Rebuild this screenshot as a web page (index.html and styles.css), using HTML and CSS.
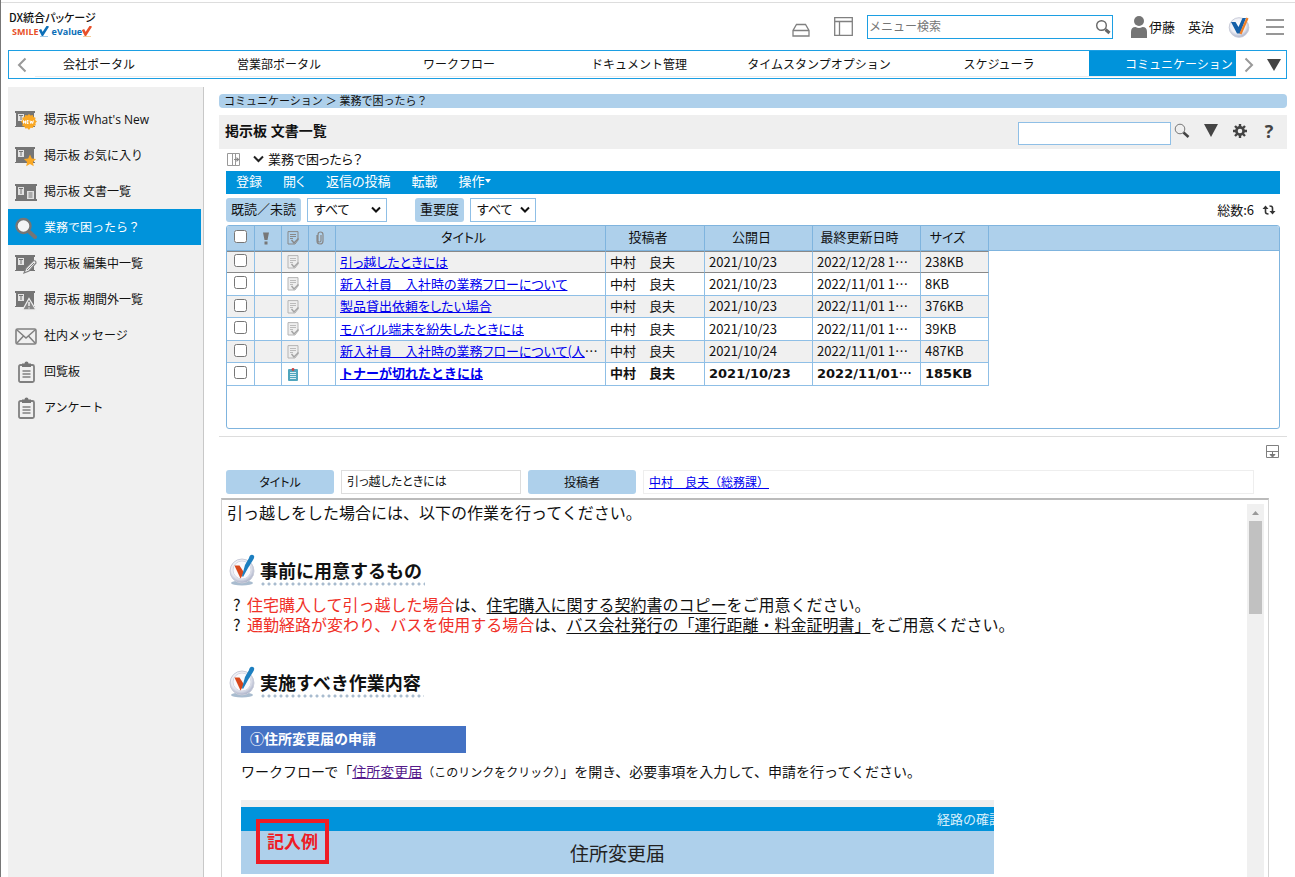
FILE: index.html
```html
<!DOCTYPE html>
<html lang="ja">
<head>
<meta charset="utf-8">
<title>掲示板 文書一覧</title>
<link rel="stylesheet" href="styles.css">
</head>
<body>
<svg class="defs" aria-hidden="true">
  <defs>
    <radialGradient id="disc" cx="45%" cy="40%" r="60%">
      <stop offset="0" stop-color="#ffffff"/><stop offset="0.65" stop-color="#eeeff5"/><stop offset="1" stop-color="#a9b0c8"/>
    </radialGradient>
  </defs>
  <symbol id="i-search" viewBox="0 0 16 16"><circle cx="6.5" cy="6.5" r="4.8" fill="none" stroke="currentColor" stroke-width="1.4"/><path d="M10.5 10.5 14.5 14" stroke="currentColor" stroke-width="3" fill="none"/></symbol>
  <symbol id="i-board" viewBox="0 0 22 22"><path d="M0 2h20v2h-1v13h1v1H0v-1h1V4H0z" fill="#757575"/><path d="M3 5h6v7H3z" fill="#e4e4e4"/><path d="M4 6.500h4M6 7v4" stroke="#757575" fill="none"/></symbol>
  <symbol id="i-clip" viewBox="0 0 22 22"><rect x="4" y="4" width="15" height="17" rx="1.500" fill="none" stroke="#808080" stroke-width="1.800"/><path d="M7 2.500h2.500a2 2 0 0 1 4 0H16V6H7z" fill="#757575"/><path d="M7.500 10h8M7.500 13h8M7.500 16h8" stroke="#808080" stroke-width="1.600"/></symbol>
  <symbol id="i-read" viewBox="0 0 12 14"><path d="M1 .6h10v8.500L8 13H1z" fill="#eee" stroke="#b4b4b4"/><path d="M3 3.500h6M3 5.500h6M3 7.500h3" stroke="#bbb"/><path d="m4.500 9 2.500 3 4.500-4.500" fill="none" stroke="#a4a4a4" stroke-width="1.500"/></symbol>
  <symbol id="i-mark" viewBox="0 0 27 32">
    <ellipse cx="13" cy="29" rx="11" ry="2.500" fill="#a9bccf"/>
    <circle cx="13" cy="17" r="12" fill="url(#disc)" stroke="#c9ccd9"/>
    <circle cx="13" cy="16" r="9" fill="#fafafd" stroke="#d5d8e4"/>
    <path d="M5.500 11.500h5l4.500 7-3.500 6z" fill="#d8481c"/>
    <path d="m13 22 3-11 4-7q1-4 4-3 2.500 1 0 5l-5 8-5 9z" fill="#1d7fc0"/>
  </symbol>
</svg>

<div class="app">
  <header class="top">
    <div class="logo">
      <div class="logo-title">DX統合パッケージ</div>
      <div class="logo-sub">
        <span class="smile">SMILE</span><svg width="10" height="11" viewBox="0 0 10 11"><path d="m1 3.500 2.500 5L9 0" fill="none" stroke="#0b6fb8" stroke-width="2.600"/><path d="M1 10.500h8" stroke="#9ec9e8"/></svg>
        <span class="evalue">eValue</span><svg width="10" height="11" viewBox="0 0 10 11"><path d="m1 3.500 2.500 5L9 0" fill="none" stroke="#e8502a" stroke-width="2.600"/><path d="M1 10.500h8" stroke="#f5cd9c"/></svg>
      </div>
    </div>
    <div class="top-tools">
      <button class="icon-btn tray" aria-label="トレイ"><svg width="18" height="20" viewBox="0 0 18 20"><path d="M4.500 5.500h9l3.500 6v5.500H1v-5.500zM1 11.500h16" fill="none" stroke="#808080" stroke-width="1.300"/></svg></button>
      <button class="icon-btn panes" aria-label="レイアウト"><svg width="19" height="19" viewBox="0 0 19 19"><path d="M.7.7h17.600v17.600H.7zM.7 4.500h17.600M5.500 4.500v14" fill="none" stroke="#808080" stroke-width="1.300"/></svg></button>
      <label class="menu-search">
        <input type="text" placeholder="メニュー検索" aria-label="メニュー検索">
        <svg width="16" height="16"><use href="#i-search"/></svg>
      </label>
      <div class="user">
        <svg width="16" height="22" viewBox="0 0 16 22"><circle cx="8" cy="5" r="5" fill="#757575"/><path d="M0 22v-6q0-5 4.500-5 3.500 2 7 0 4.500 0 4.500 5v6z" fill="#757575"/></svg>
        <span>伊藤　英治</span>
      </div>
      <svg class="brand" width="22" height="22" viewBox="0 0 22 22"><circle cx="11" cy="11.500" r="9.800" fill="url(#disc)" stroke="#c9ccd9"/><path d="M3 6h4.500l3 5L14.500 2H18L12 17.500H9z" fill="#1560a8"/><path d="M12.500 18 19.500 2" fill="none" stroke="#f07f26" stroke-width="2.200"/></svg>
      <button class="icon-btn" aria-label="メニュー"><svg width="18" height="16" viewBox="0 0 18 16"><path d="M0 1h18M0 8h18M0 15h18" stroke="#757575" stroke-width="1.600"/></svg></button>
    </div>
  </header>

  <nav class="tabs">
    <div class="tab-view">
      <a href="#">会社ポータル</a><a href="#">営業部ポータル</a><a href="#">ワークフロー</a><a href="#">ドキュメント管理</a><a href="#">タイムスタンプオプション</a><a href="#">スケジューラ</a><a href="#" class="on">コミュニケーション</a>
    </div>
    <button class="icon-btn prev" aria-label="前へ"><svg width="10" height="16" viewBox="0 0 10 16"><path d="M8.500 1.500 2 8l6.500 6.500" fill="none" stroke="#999" stroke-width="2"/></svg></button>
    <button class="icon-btn next" aria-label="次へ"><svg width="10" height="16" viewBox="0 0 10 16"><path d="M1.500 1.500 8 8l-6.500 6.500" fill="none" stroke="#999" stroke-width="2"/></svg></button>
    <button class="icon-btn more" aria-label="一覧"><svg width="14" height="12" viewBox="0 0 14 12"><path d="M0 0h14L7 12z" fill="#444"/></svg></button>
  </nav>

  <div class="body">
    <aside class="side">
      <a href="#"><svg width="22" height="22" viewBox="0 0 22 22"><use href="#i-board"/><path d="m14 5 1.500 1.600 2.200-.6.700 2.100 2.200.7-.500 2.200L22 12.500 20.400 14l.4 2.300-2.200.7-.8 2.100-2.200-.4L14 21l-1.600-1.800-2.200.4-.8-2.100-2.200-.7.500-2.200L6 12.500 7.600 11l-.3-2.200 2.200-.7.700-2.100 2.200.6z" fill="#f9a825"/><path d="M8.500 14.500v-3l2 3v-3M13.500 11.500H12v3h1.500M12 13h1.500M15 11.500l.8 3 .9-2.500.9 2.500.8-3" fill="none" stroke="#fff"/></svg>掲示板 What's New</a>
      <a href="#"><svg width="22" height="22" viewBox="0 0 22 22"><use href="#i-board"/><path d="m15 9.500 1.800 4 4.300.5-3.200 2.900.9 4.300-3.800-2.200-3.800 2.200.9-4.300L8.900 14l4.300-.5z" fill="#f9a825"/></svg>掲示板 お気に入り</a>
      <a href="#"><svg width="22" height="22" viewBox="0 0 22 22"><path d="M0 3h22v2h-1v13h1v2H0v-2h1V5H0z" fill="#757575"/><path d="M3 6h6v8H3zM12 10h7v8h-7z" fill="#e0e0e0"/><path d="M4 7.500h4M6 8v5M13.500 12h4M13.500 14h4M13.500 16h4" stroke="#757575"/></svg>掲示板 文書一覧</a>
      <a href="#" class="on"><svg width="22" height="22" viewBox="0 0 22 22"><circle cx="8.500" cy="9" r="7" fill="#f4f4f4" stroke="#757575" stroke-width="2.400"/><path d="m14.500 15 5.500 5" stroke="#757575" stroke-width="4" stroke-linecap="round"/></svg>業務で困ったら？</a>
      <a href="#"><svg width="22" height="22" viewBox="0 0 22 22"><use href="#i-board"/><path d="m9 20 2-5 7-7q3-1 3 2l-7 8z" fill="#eee" stroke="#808080" stroke-width="1.200"/><path d="m12 17 7-7" stroke="#808080"/></svg>掲示板 編集中一覧</a>
      <a href="#"><svg width="22" height="22" viewBox="0 0 22 22"><use href="#i-board"/><path d="M14 9.500 21 21H7.500z" fill="#888" stroke="#eee" stroke-width="1.300"/><path d="M14 13v4M14 18.500v1" stroke="#eee" stroke-width="1.500"/></svg>掲示板 期間外一覧</a>
      <a href="#"><svg width="22" height="22" viewBox="0 0 22 22"><rect x="1" y="4" width="20" height="15" rx="1.500" fill="none" stroke="#808080" stroke-width="1.600"/><path d="m2 5 9 8 9-8M2 18l6.500-7M20 18l-6.500-7" fill="none" stroke="#808080" stroke-width="1.500"/></svg>社内メッセージ</a>
      <a href="#"><svg width="22" height="22"><use href="#i-clip"/></svg>回覧板</a>
      <a href="#"><svg width="22" height="22"><use href="#i-clip"/></svg>アンケート</a>
    </aside>

    <main class="main">
      <div class="crumbs">コミュニケーション ＞ 業務で困ったら？</div>
      <div class="title-bar">
        <h1>掲示板 文書一覧</h1>
        <input type="text" aria-label="文書検索">
        <button class="icon-btn" aria-label="検索"><svg width="16" height="16" viewBox="0 0 16 16"><circle cx="6" cy="6" r="4.800" fill="none" stroke="#777"/><path d="m9.500 9.500 5 4.500" stroke="#444" stroke-width="2.600"/></svg></button>
        <button class="icon-btn" aria-label="条件"><svg width="14" height="13" viewBox="0 0 14 13"><path d="M0 0h14L7 13z" fill="#444"/></svg></button>
        <button class="icon-btn" aria-label="設定"><svg width="14" height="14" viewBox="0 0 14 14"><circle cx="7" cy="7" r="3.600" fill="none" stroke="#444" stroke-width="2.600"/><path d="M7 0v3M7 11v3M0 7h3M11 7h3M2 2l2 2M10 10l2 2M12 2l-2 2M4 10l-2 2" stroke="#444" stroke-width="2.400"/></svg></button>
        <button class="icon-btn help" aria-label="ヘルプ">?</button>
      </div>

      <section class="list">
        <div class="folder">
          <svg width="14" height="13" viewBox="0 0 14 13"><path d="M.5.5h12v12H.5zM5.500.5v12M8.500.5v12" fill="none" stroke="#999"/><path d="M7 6.500h3" stroke="#888"/><path d="m9.500 4 3 2.500-3 2.500z" fill="#888"/></svg>
          <svg class="chev" width="11" height="8" viewBox="0 0 11 8"><path d="m1 1.500 4.500 4.500L10 1.500" fill="none" stroke="#222" stroke-width="2"/></svg>
          <span>業務で困ったら？</span>
        </div>
        <div class="toolbar">
          <button>登録</button><button>開く</button><button>返信の投稿</button><button>転載</button><button>操作<svg width="6" height="4" viewBox="0 0 6 4"><path d="M0 0h6L3 4z" fill="#fff"/></svg></button>
        </div>
        <div class="filters">
          <label class="tag" for="f-read">既読／未読</label>
          <select id="f-read" class="sel wide"><option>すべて</option></select>
          <label class="tag second" for="f-prio">重要度</label>
          <select id="f-prio" class="sel"><option>すべて</option></select>
          <span class="total">総数:6</span>
          <button class="icon-btn" aria-label="更新"><svg width="14" height="12" viewBox="0 0 14 12"><path d="M3.500 4v4q0 2 3 2M10.500 8V4q0-2-3-2" fill="none" stroke="#333" stroke-width="1.600"/><path d="m.5 5 3-3.500 3 3.500zM7.500 7l3 3.500 3-3.500z" fill="#333"/></svg></button>
        </div>
        <div class="grid">
          <table>
            <colgroup><col class="c-chk"><col class="c-ico"><col class="c-ico"><col class="c-ico"><col class="c-title"><col class="c-by"><col class="c-date"><col class="c-date"><col class="c-size"><col></colgroup>
            <thead>
              <tr>
                <th><input type="checkbox" aria-label="すべて選択"></th>
                <th><svg width="8" height="13" viewBox="0 0 8 13"><path d="M1 .5h6L5.500 8h-3zM2.500 9.500h3v3h-3z" fill="#777"/></svg></th>
                <th><svg width="12" height="14" viewBox="0 0 12 14"><path d="M1 .6h10v8.500L8 13H1z" fill="none" stroke="#888"/><path d="M3 3.500h6M3 5.500h6M3 7.500h3" stroke="#888"/><path d="m4.500 9 2.500 3 4.500-4.500" fill="none" stroke="#888" stroke-width="1.500"/></svg></th>
                <th><svg width="8" height="14" viewBox="0 0 8 14"><path d="M1 4v6q0 3 3 3t3-3V4q0-3-2.500-3T2 4v5.500q0 1.500 1.500 1.500T5 9.500V4" fill="none" stroke="#888" stroke-width="1.200"/></svg></th>
                <th>タイトル</th><th>投稿者</th><th>公開日</th><th>最終更新日時</th><th>サイズ</th><th></th>
              </tr>
            </thead>
            <tbody>
              <tr class="cur"><td><input type="checkbox" aria-label="選択"></td><td></td><td><svg width="12" height="14"><use href="#i-read"/></svg></td><td></td><td><a href="#">引っ越したときには</a></td><td>中村　良夫</td><td>2021/10/23</td><td>2022/12/28 1…</td><td>238KB</td><td></td></tr>
              <tr><td><input type="checkbox" aria-label="選択"></td><td></td><td><svg width="12" height="14"><use href="#i-read"/></svg></td><td></td><td><a href="#">新入社員　入社時の業務フローについて</a></td><td>中村　良夫</td><td>2021/10/23</td><td>2022/11/01 1…</td><td>8KB</td><td></td></tr>
              <tr><td><input type="checkbox" aria-label="選択"></td><td></td><td><svg width="12" height="14"><use href="#i-read"/></svg></td><td></td><td><a href="#">製品貸出依頼をしたい場合</a></td><td>中村　良夫</td><td>2021/10/23</td><td>2022/11/01 1…</td><td>376KB</td><td></td></tr>
              <tr><td><input type="checkbox" aria-label="選択"></td><td></td><td><svg width="12" height="14"><use href="#i-read"/></svg></td><td></td><td><a href="#">モバイル端末を紛失したときには</a></td><td>中村　良夫</td><td>2021/10/23</td><td>2022/11/01 1…</td><td>39KB</td><td></td></tr>
              <tr><td><input type="checkbox" aria-label="選択"></td><td></td><td><svg width="12" height="14"><use href="#i-read"/></svg></td><td></td><td><a href="#">新入社員　入社時の業務フローについて(人</a>…</td><td>中村　良夫</td><td>2021/10/24</td><td>2022/11/01 1…</td><td>487KB</td><td></td></tr>
              <tr class="unread"><td><input type="checkbox" aria-label="選択"></td><td></td><td><svg width="10" height="13" viewBox="0 0 10 13"><rect y="1" width="10" height="12" rx="1" fill="#4fa5bd"/><path d="M2 4.500h6M2 6.500h6M2 8.500h6M2 10.500h6" stroke="#d5ecf2"/><circle cx="5" cy="1.500" r="1.400" fill="#c44"/></svg></td><td></td><td><a href="#">トナーが切れたときには</a></td><td>中村　良夫</td><td>2021/10/23</td><td>2022/11/01<span class="dots">…</span></td><td>185KB</td><td></td></tr>
            </tbody>
          </table>
        </div>
      </section>

      <section class="preview">
        <div class="preview-tools"><button class="icon-btn" aria-label="表示切替"><svg width="13" height="13" viewBox="0 0 13 13"><path d="M.5.5h12v12H.5zM.5 6.500h12" fill="none" stroke="#808080"/><path d="M6.500 7v3M4 9.500h5L6.500 12z" fill="#777" stroke="#777"/></svg></button></div>
        <div class="meta">
          <label class="meta-tag" for="m-title">タイトル</label>
          <input id="m-title" type="text" value="引っ越したときには">
          <span class="meta-tag">投稿者</span>
          <div class="meta-by"><a href="#">中村　良夫（総務課）</a></div>
        </div>
        <div class="frame">
          <article class="doc">
            <p>引っ越しをした場合には、以下の作業を行ってください。</p>
            <h2><svg width="27" height="32"><use href="#i-mark"/></svg><span>事前に用意するもの</span></h2>
            <ul>
              <li><em>住宅購入して引っ越した場合</em>は、<u>住宅購入に関する契約書のコピー</u>をご用意ください。</li>
              <li><em>通勤経路が変わり、バスを使用する場合</em>は、<u>バス会社発行の「運行距離・料金証明書」</u>をご用意ください。</li>
            </ul>
            <h2><svg width="27" height="32"><use href="#i-mark"/></svg><span>実施すべき作業内容</span></h2>
            <div class="step">
              <h3>①住所変更届の申請</h3>
              <p>ワークフローで「<a href="#">住所変更届</a><small>（このリンクをクリック）</small>」を開き、必要事項を入力して、申請を行ってください。</p>
              <div class="sample">
                <div class="sample-bar">経路の確認</div>
                <div class="sample-title">住所変更届</div>
                <span class="sample-mark">記入例</span>
              </div>
            </div>
          </article>
          <div class="scroll"><svg width="17" height="17" viewBox="0 0 17 17"><path d="m5 11 3.500-4 3.500 4z" fill="#999"/></svg><div class="thumb"></div></div>
        </div>
      </section>
    </main>
  </div>
</div>
</body>
</html>
```
FILE: styles.css
```css
* { box-sizing: border-box; }

body {
  margin: 0;
  background: #fff;
  color: #111;
  font: 12px/18px "Open Sans", "Noto Sans CJK JP", sans-serif;
}

h1, h2, h3, p, ul { margin: 0; padding: 0; }
svg { display: block; flex: none; }
.defs { position: absolute; width: 0; height: 0; }

button, input, select { font: inherit; color: inherit; }
.icon-btn {
  display: flex;
  align-items: center;
  justify-content: center;
  padding: 0;
  border: 0;
  background: none;
}

.app {
  display: flex;
  flex-direction: column;
  height: 100vh;
  overflow: hidden;
  padding: 2px 8px 0 7px;
  border-left: 1px solid #777;
}
.app::before {
  content: "";
  height: 1px;
  margin: 0 -8px 0 -7px;
  background: #ddd;
}

/* header */
.top {
  display: flex;
  justify-content: space-between;
  flex: none;
  height: 47px;
}
.logo { padding: 6px 1px; }
.logo-title {
  font: 500 11px/17px "Noto Sans CJK JP", sans-serif;
  font-feature-settings: "palt";
}
.logo-sub {
  display: flex;
  align-items: center;
  padding-left: 3px;
  font: 700 9px/10px "Open Sans", sans-serif;
}
.smile { color: #e8502a; }
.evalue { color: #0b6fb8; padding-left: 3px; }

.top-tools {
  display: flex;
  align-items: center;
  padding-right: 3px;
}
.tray { margin-right: 24px; padding-top: 4px; }
.panes { margin-right: 14px; }
.menu-search {
  display: flex;
  align-items: center;
  width: 246px;
  height: 24px;
  margin-right: 18px;
  padding: 0 1px;
  border: 1px solid #1c9fe3;
  color: #666;
}
.menu-search input {
  flex: 1;
  min-width: 0;
  padding: 0;
  border: 0;
  outline: 0;
  background: none;
}
.menu-search input::placeholder { color: #757575; }
.user {
  display: flex;
  align-items: center;
  gap: 2px;
  margin-right: 14px;
  font-size: 13px;
}
.brand { margin-right: 16px; }

/* tabs */
.tabs {
  position: relative;
  display: flex;
  flex: none;
  height: 29px;
  border: 1px solid #1c9fe3;
}
.tab-view {
  display: flex;
  flex: 1;
  overflow: hidden;
  margin-bottom: 1px;
  border-bottom: 1px solid #ececec;
}
.tab-view a {
  flex: 0 0 180px;
  color: #111;
  line-height: 28px;
  text-align: center;
  text-decoration: none;
}
.tab-view .on { background: #0093db; color: #fff; }
.prev { position: absolute; left: 0; top: 0; width: 26px; height: 27px; background: #fff; }
.next, .more { width: 25px; }

/* body */
.body {
  display: flex;
  flex: 1;
  gap: 15px;
  min-height: 0;
  padding-top: 8px;
}
.side {
  flex: 0 0 196px;
  padding: 14px 2px 0 0;
  background: #f0f0f0;
  border-right: 1px solid #c8c8c8;
}
.side a {
  display: flex;
  align-items: center;
  gap: 7px;
  height: 36px;
  padding: 2px 0 0 7px;
  color: #111;
  text-decoration: none;
}
.side .on { background: #0093db; color: #fff; }

.main {
  display: flex;
  flex: 1;
  flex-direction: column;
  min-width: 0;
  padding-top: 7px;
}
.crumbs {
  flex: none;
  height: 14px;
  padding-left: 5px;
  border-radius: 4px;
  background: #aed0eb;
  font-size: 11px;
  line-height: 13px;
}
.title-bar {
  display: flex;
  align-items: center;
  flex: none;
  height: 34px;
  margin-top: 7px;
  padding: 0 10px 3px 6px;
  background: #efefef;
}
.title-bar h1 {
  flex: 1;
  font-size: 14px;
  line-height: 20px;
}
.title-bar input {
  width: 153px;
  height: 23px;
  margin-top: 5px;
  margin-right: 3px;
  border: 1px solid #8fbfe6;
  background: #fff;
}
.title-bar .icon-btn { width: 16px; margin-right: 13px; }
.title-bar .help {
  margin-right: 0;
  color: #444;
  font-size: 18px;
  font-weight: 700;
}

/* document list */
.list {
  flex: none;
  padding: 0 7px 7px;
  border-bottom: 1px solid #ddd;
  font-family: "Noto Sans CJK JP", sans-serif;
  font-size: 13px;
  font-feature-settings: "palt";
}
.folder {
  display: flex;
  align-items: center;
  height: 22px;
  padding: 0 0 2px 1px;
}
.folder .chev { margin: 0 4px 0 12px; }
.toolbar {
  display: flex;
  gap: 21px;
  height: 23px;
  padding: 0 0 3px 10px;
  background: #0093db;
}
.toolbar button {
  display: flex;
  align-items: center;
  padding: 0;
  border: 0;
  background: none;
  color: #fff;
}
.filters {
  display: flex;
  align-items: center;
  height: 31px;
}
.tag {
  height: 24px;
  padding: 0 5px;
  border-radius: 3px;
  background: #aed0eb;
  line-height: 22px;
}
.tag.second { margin-left: 28px; }
.sel {
  appearance: none;
  width: 66px;
  height: 24px;
  margin-left: 6px;
  padding: 0 6px 2px;
  border: 1px solid #8fbfe6;
  border-radius: 0;
  background: #fff url("data:image/svg+xml,%3Csvg xmlns='http://www.w3.org/2000/svg' width='10' height='8'%3E%3Cpath d='M1 1.500l4 4 4-4' fill='none' stroke='%23111' stroke-width='2'/%3E%3C/svg%3E") no-repeat right 5px center;
  font-feature-settings: "palt";
}
.sel.wide { width: 80px; }
.total {
  margin: 0 8px 0 auto;
  font-feature-settings: normal;
}
.filters .icon-btn { margin-right: 4px; }

.grid {
  height: 204px;
  overflow: hidden;
  border: 1px solid #7fb4de;
  border-radius: 3px;
}
.grid table {
  width: 100%;
  table-layout: fixed;
  border-spacing: 0;
}
.c-chk { width: 28px; }
.c-ico { width: 27px; }
.c-title { width: 270px; }
.c-by { width: 99px; }
.c-date { width: 108px; }
.c-size { width: 68px; }
.grid th {
  height: 25px;
  padding: 0 14px 2px 0;
  background: #aed0eb;
  border-right: 1px solid #7fb4de;
  border-bottom: 1px solid #7fb4de;
  font-weight: 400;
  white-space: nowrap;
}
.grid th:last-child { border-right: 0; }
.grid th:nth-child(-n+4), .grid td:nth-child(-n+4) { padding: 0 5px 0 0; }
.grid th:first-child, .grid td:first-child { padding: 0 0 3px; }
.grid td {
  height: 22px;
  padding: 0 4px 1px;
  overflow: hidden;
  border-right: 1px solid #8fbfe6;
  border-bottom: 1px solid #8fbfe6;
  line-height: 18px;
  white-space: nowrap;
}
.grid tr:nth-child(even) td { height: 23px; }
.grid tr:nth-child(odd) td { background: #f0f0f0; }
.grid tbody td:last-child { border: 0; background: none; }
.grid th svg, .grid td svg { margin: 0 auto; }
.grid input {
  display: block;
  width: 13px;
  height: 13px;
  margin: 0 auto;
}
.grid .cur td {
  border-top: 1px solid #888;
  border-bottom-color: #888;
}
.grid .cur td:last-child { border: 0; }
.grid a, .meta a { color: #00e; }
.grid .unread {
  font-family: "DejaVu Sans", "Noto Sans CJK JP", sans-serif;
  font-feature-settings: normal;
  font-weight: 700;
}
.dots { font-family: "Noto Sans CJK JP", sans-serif; }

/* preview */
.preview {
  display: flex;
  flex: 1;
  flex-direction: column;
  min-height: 0;
}
.preview-tools {
  display: flex;
  justify-content: flex-end;
  padding: 8px 8px 12px 0;
}
.meta {
  display: flex;
  gap: 7px;
  height: 24px;
  margin: 0 33px 4px 7px;
  font-family: "Noto Sans CJK JP", sans-serif;
}
.meta-tag {
  width: 108px;
  border-radius: 3px;
  background: #aed0eb;
  line-height: 23px;
  text-align: center;
  font-feature-settings: "palt";
}
.meta input {
  width: 180px;
  padding: 0 5px 2px;
  border: 1px solid #ddd;
  font-feature-settings: "palt";
}
.meta-by {
  flex: 1;
  padding: 0 5px;
  border: 1px solid #eee;
  line-height: 22px;
}
.frame {
  display: flex;
  flex: 1;
  min-height: 0;
  margin: 0 18px 0 2px;
  padding: 2px 4px 0 5px;
  border: 1px solid #d4d4d4;
  border-top: 2px solid #bbb;
  border-bottom: 0;
}
.doc {
  flex: 1;
  min-width: 0;
  overflow: hidden;
  font: 16px/20px "Noto Sans CJK JP", sans-serif;
}
.doc h2 {
  display: flex;
  gap: 4px;
  height: 32px;
  margin: 32px 0 8px 2px;
  font-size: 18px;
  line-height: 32px;
}
.doc h2 span {
  padding-right: 3px;
  background: radial-gradient(circle, #a9bccf 1px, transparent 2px) repeat-x left bottom / 6px 4px;
}
.doc ul { list-style: none; padding-left: 6px; }
.doc li::before {
  content: "?";
  display: inline-block;
  width: 14px;
}
.doc em { color: #f03028; font-style: normal; }
.doc ul + h2 { margin-top: 32px; margin-bottom: 28px; }
.doc u { text-underline-offset: 2px; }
.step { padding-left: 14px; }
.step h3 {
  width: 225px;
  height: 27px;
  padding-left: 9px;
  background: #4472c4;
  color: #fff;
  font-size: 14px;
  line-height: 24px;
}
.step p { padding: 8px 0 18px; font-size: 14px; }
.step a { color: #551a8b; }
.step small { font-size: 12px; }
.sample {
  position: relative;
  width: 753px;
  max-width: 100%;
  border-top: 7px solid #efefef;
}
.sample-bar {
  height: 24px;
  padding-left: 696px;
  overflow: hidden;
  background: #0093db;
  color: #d8effb;
  font-size: 13px;
  line-height: 23px;
  white-space: nowrap;
}
.sample-title {
  background: #aed0eb;
  color: #222;
  font-size: 19px;
  line-height: 43px;
  text-align: center;
}
.sample-mark {
  position: absolute;
  left: 15px;
  top: 12px;
  width: 73px;
  height: 45px;
  border: 4px solid #ee1c25;
  color: #ee1c25;
  font-size: 17px;
  font-weight: 700;
  line-height: 36px;
  text-align: center;
}
.scroll {
  flex: 0 0 17px;
  margin-top: 2px;
  background: #f0f0f0;
}
.thumb {
  height: 93px;
  margin: 0 2px;
  background: #c1c1c1;
}
```
